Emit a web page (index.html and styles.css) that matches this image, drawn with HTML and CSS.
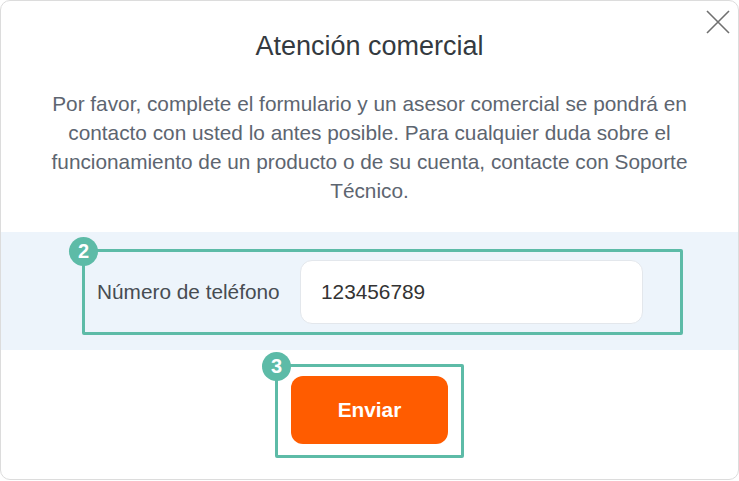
FILE: index.html
```html
<!DOCTYPE html>
<html lang="es">
<head>
<meta charset="utf-8">
<title>Atención comercial</title>
<link rel="stylesheet" href="styles.css">
</head>
<body>
<div class="modal">
  <button class="close" aria-label="Cerrar">
    <svg width="24" height="24" viewBox="0 0 24 24"><path d="M1 1 L23 23 M23 1 L1 23" stroke="#707070" stroke-width="1.6" fill="none"/></svg>
  </button>
  <h1 class="title">Atención comercial</h1>
  <p class="intro">Por favor, complete el formulario y un asesor comercial se pondrá en contacto con usted lo antes posible. Para cualquier duda sobre el funcionamiento de un producto o de su cuenta, contacte con Soporte Técnico.</p>
  <div class="band">
    <div class="mark mark-field">
      <span class="badge">2</span>
      <label class="label" for="tel">Número de teléfono</label>
      <input class="input" id="tel" type="text" value="123456789">
    </div>
  </div>
  <div class="footer">
    <div class="mark mark-btn">
      <span class="badge">3</span>
      <button class="send">Enviar</button>
    </div>
  </div>
</div>
</body>
</html>
```
FILE: styles.css
```css
* { box-sizing: border-box; }
html, body { margin: 0; padding: 0; background: #fff; }
body { font-family: "Liberation Sans", Arial, sans-serif; }

.modal {
  position: relative;
  width: 739px;
  height: 480px;
  border: 1px solid #dcdcdc;
  border-radius: 10px;
  background: #fff;
  overflow: hidden;
}

.close {
  position: absolute;
  top: 9px;
  right: 8px;
  width: 24px;
  height: 24px;
  padding: 0;
  border: 0;
  background: none;
}
.close svg { display: block; }

.title {
  margin: 29px 0 0;
  font-size: 27px;
  line-height: 32px;
  font-weight: 400;
  color: #343a40;
  text-align: center;
}

.intro {
  margin: 27px 0 0;
  padding: 0 46px;
  font-size: 20.8px;
  line-height: 29px;
  color: #5d6570;
  text-align: center;
}

.band {
  margin-top: 27px;
  height: 118px;
  background: #edf4fb;
  padding: 17px 0 0 81px;
}

.mark {
  position: relative;
  border: 3px solid #5dbba7;
  border-radius: 2px;
}

.badge {
  position: absolute;
  left: -16px;
  top: -15px;
  width: 29px;
  height: 29px;
  border-radius: 50%;
  background: #5dbba7;
  color: #fff;
  font-weight: 700;
  font-size: 20px;
  line-height: 29px;
  text-align: center;
}

.mark-field {
  width: 601px;
  height: 86px;
  display: flex;
  align-items: center;
  padding-left: 12px;
}

.label {
  width: 203px;
  font-size: 20.8px;
  color: #474c52;
}

.input {
  width: 343px;
  height: 64px;
  border: 1px solid #e3e7ec;
  border-radius: 12px;
  background: #fff;
  padding: 0 20px;
  font-family: "Liberation Sans", Arial, sans-serif;
  font-size: 20.8px;
  color: #333;
  outline: none;
}

.footer {
  display: flex;
  justify-content: center;
  padding-top: 14px;
}

.mark-btn {
  width: 189px;
  height: 94px;
  padding: 9px 13px 0;
}

.send {
  display: block;
  width: 157px;
  height: 68px;
  border: 0;
  border-radius: 12px;
  background: #ff5c00;
  color: #fff;
  font-family: "Liberation Sans", Arial, sans-serif;
  font-weight: 700;
  font-size: 20.8px;
}
```
